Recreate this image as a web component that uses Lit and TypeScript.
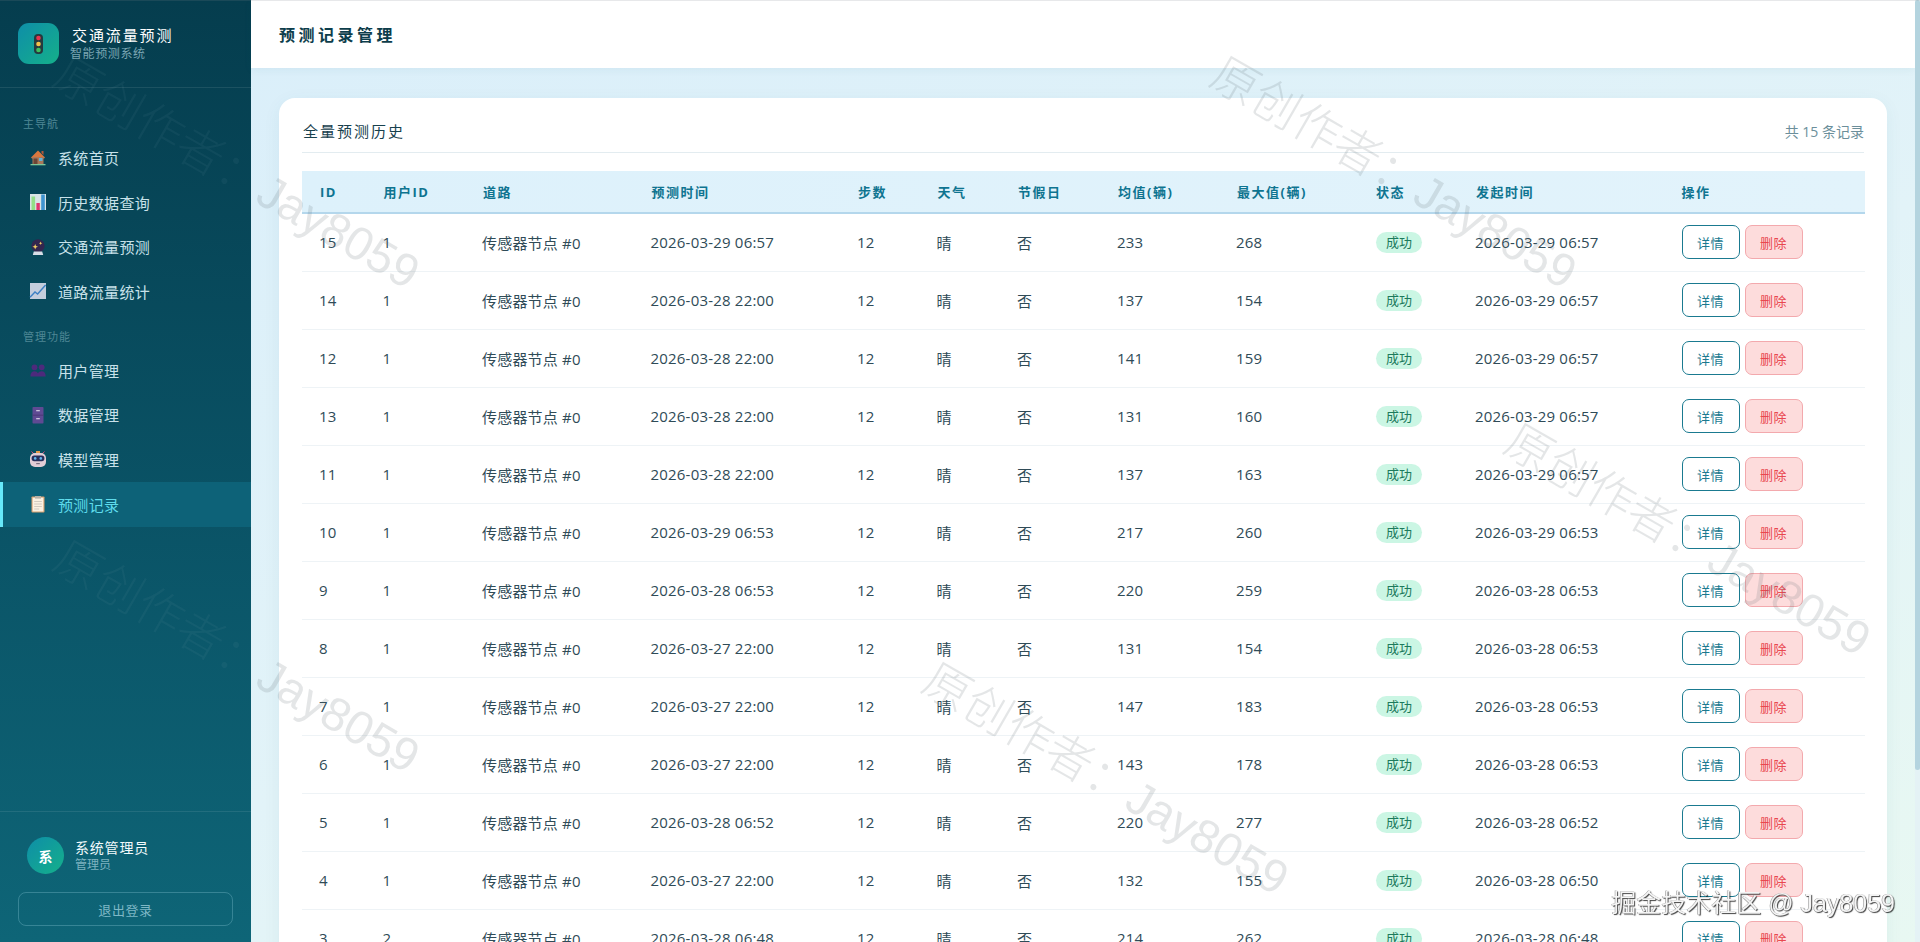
import { LitElement, html, css, svg } from 'lit';
import { customElement } from 'lit/decorators.js';

const icons: Record<string, unknown> = {
  house: svg`<path d="M2 9.5 9 2.5l7 7-1 1H3z" fill="#d9773f"/><path d="M12.5 3h2v4l-2-2z" fill="#b5583a"/><rect x="3.5" y="9" width="11" height="7" fill="#a8785a"/><rect x="4.5" y="10.5" width="4" height="5.5" fill="#6b4636"/><rect x="10" y="10" width="3.4" height="3" fill="#62b4d8"/><rect x="1.5" y="16" width="15" height="1.3" fill="#7cc79a"/>`,
  bars: svg`<rect x="1" y="1" width="16" height="16" fill="#d9e4e6"/><rect x="2.5" y="3.5" width="3.6" height="13.5" fill="#93de87"/><rect x="7.4" y="10" width="3.4" height="7" fill="#e2356f"/><rect x="12.2" y="1.5" width="3.6" height="15.5" fill="#3f93cf"/>`,
  ball: svg`<circle cx="9" cy="7.8" r="6.6" fill="#33264f"/><path d="M4.8 13.5h8.4l1 3.5H3.8z" fill="#d7dde6"/><path d="M6.2 6 7 8l2 .8-2 .8-.8 2-.8-2-2-.8 2-.8z" fill="#f2cf63"/><path d="M11.6 3.4l.5 1.3 1.3.5-1.3.5-.5 1.3-.5-1.3-1.3-.5 1.3-.5z" fill="#f2cf63"/>`,
  chart: svg`<rect x="1" y="1" width="16" height="16" fill="#c4cedd"/><path d="M1 15.2 6 10l2.6 2L16.6 3" fill="none" stroke="#3e80c4" stroke-width="1.4"/>`,
  users: svg`<g fill="#4d2a7c"><circle cx="5.5" cy="6.3" r="2.9"/><circle cx="12.7" cy="6.3" r="2.9"/><path d="M1.4 15.6c0-3.6 1.7-5.3 4.1-5.3 1.5 0 2.7.7 3.4 2 .7-1.3 2-2 3.8-2 2.4 0 4 1.7 4 5.3z"/></g>`,
  cabinet: svg`<rect x="3.5" y="1" width="11" height="16.5" rx=".8" fill="#5f4a93"/><path d="M3.5 9.2h11" stroke="#453570" stroke-width=".8"/><rect x="7.2" y="4" width="3.6" height="1.3" fill="#c9c3dc"/><rect x="7.2" y="12" width="3.6" height="1.3" fill="#c9c3dc"/>`,
  robot: svg`<path d="M2.5 1.5l2.6 2.6M15.5 1.5l-2.6 2.6" stroke="#d3477c" stroke-width="1"/><rect x="7" y="1" width="4" height="2.4" fill="#e29a4a"/><rect x="1" y="3" width="16" height="14" rx="5" fill="#e2cdd6"/><rect x="2.6" y="5.6" width="12.8" height="5.6" rx="2.6" fill="#28305c"/><circle cx="6.2" cy="8.4" r="1.3" fill="#62b7ef"/><circle cx="11.8" cy="8.4" r="1.3" fill="#62b7ef"/><rect x="7.2" y="13" width="3.6" height="1.2" fill="#7c6f80"/>`,
  clipboard: svg`<rect x="2.5" y="1.5" width="13" height="16" rx=".8" fill="#d9a06f"/><rect x="3.6" y="2.6" width="10.8" height="13.9" fill="#faf1e2"/><rect x="6" y="1" width="6" height="2.6" fill="#b8b2a8"/><path d="M5.2 6.5h7.6M5.2 9h7.6M5.2 11.5h7.6M5.2 14h5" stroke="#c8c2b8" stroke-width=".8"/>`,
};

const mainNav = [
  { icon: 'house', label: '系统首页' },
  { icon: 'bars', label: '历史数据查询' },
  { icon: 'ball', label: '交通流量预测' },
  { icon: 'chart', label: '道路流量统计' },
];

const adminNav = [
  { icon: 'users', label: '用户管理' },
  { icon: 'cabinet', label: '数据管理' },
  { icon: 'robot', label: '模型管理' },
  { icon: 'clipboard', label: '预测记录', active: true },
];

const columns = [
  { label: 'ID', width: 63.5 },
  { label: '用户ID', width: 99.5 },
  { label: '道路', width: 168.5 },
  { label: '预测时间', width: 206.5 },
  { label: '步数', width: 79.5 },
  { label: '天气', width: 80.5 },
  { label: '节假日', width: 100 },
  { label: '均值(辆)', width: 119 },
  { label: '最大值(辆)', width: 139 },
  { label: '状态', width: 100 },
  { label: '发起时间', width: 205.5 },
  { label: '操作', width: 201.5 },
];

// id, user, predict time, mean, max, created
const records: [number, number, string, number, number, string][] = [
  [15, 1, '2026-03-29 06:57', 233, 268, '2026-03-29 06:57'],
  [14, 1, '2026-03-28 22:00', 137, 154, '2026-03-29 06:57'],
  [12, 1, '2026-03-28 22:00', 141, 159, '2026-03-29 06:57'],
  [13, 1, '2026-03-28 22:00', 131, 160, '2026-03-29 06:57'],
  [11, 1, '2026-03-28 22:00', 137, 163, '2026-03-29 06:57'],
  [10, 1, '2026-03-29 06:53', 217, 260, '2026-03-29 06:53'],
  [9, 1, '2026-03-28 06:53', 220, 259, '2026-03-28 06:53'],
  [8, 1, '2026-03-27 22:00', 131, 154, '2026-03-28 06:53'],
  [7, 1, '2026-03-27 22:00', 147, 183, '2026-03-28 06:53'],
  [6, 1, '2026-03-27 22:00', 143, 178, '2026-03-28 06:53'],
  [5, 1, '2026-03-28 06:52', 220, 277, '2026-03-28 06:52'],
  [4, 1, '2026-03-27 22:00', 132, 155, '2026-03-28 06:50'],
  [3, 2, '2026-03-28 06:48', 214, 262, '2026-03-28 06:48'],
  [2, 1, '2026-03-27 22:00', 136, 158, '2026-03-28 06:48'],
  [1, 1, '2026-03-27 22:00', 140, 166, '2026-03-28 06:45'],
];

// start of each repeated watermark, as left/top in the viewport
const marks = [
  { x: 58, y: 41, side: true },
  { x: 1215, y: 41 },
  { x: 1509, y: 408 },
  { x: 58, y: 525, side: true },
  { x: 927, y: 647 },
];

@customElement('app-root')
export class AppRoot extends LitElement {
  static override styles = css`
    :host {
      display: block;
      height: 100vh;
      font-family: 'Open Sans', 'Noto Sans CJK SC', sans-serif;
      color: #2f4b57;
    }

    .page {
      display: flex;
      align-items: flex-start;
      height: 100vh;
      overflow: hidden;
      background: linear-gradient(160deg, #d9eefa 0%, #e2f3f8 55%, #e8f8f2 100%);
    }

    .sidebar {
      flex: 0 0 251px;
      height: 100vh;
      display: flex;
      flex-direction: column;
      background: linear-gradient(180deg, #053d4e 0%, #0a5366 55%, #0e6577 100%);
    }

    .brand {
      display: flex;
      align-items: center;
      gap: 13px;
      height: 88px;
      padding: 0 18px;
      box-sizing: border-box;
      border-bottom: 1px solid rgba(255, 255, 255, 0.09);
    }

    .brand-logo {
      width: 41px;
      height: 41px;
      border-radius: 11px;
      background: linear-gradient(135deg, #0e8ea8, #15b08a);
      display: flex;
      align-items: center;
      justify-content: center;
    }

    .brand-title {
      font-size: 15px;
      line-height: 20px;
      letter-spacing: 1.9px;
      color: #fff;
    }

    .brand-sub {
      font-size: 12px;
      line-height: 17px;
      letter-spacing: 0.6px;
      color: #7ba6b3;
      margin-left: -2px;
    }

    .nav {
      flex: 1;
      padding-top: 29px;
    }

    .nav-label {
      font-size: 11px;
      line-height: 14px;
      letter-spacing: 1px;
      color: #4f8795;
      padding-left: 23px;
      margin-bottom: 4px;
    }

    .nav-group {
      margin-bottom: 16px;
    }

    .nav-item {
      display: flex;
      align-items: center;
      gap: 11px;
      height: 44.7px;
      padding-left: 29px;
      box-sizing: border-box;
      font-size: 15px;
      letter-spacing: 0.35px;
      color: #c8e2ea;

      &.active {
        background: #0d6278;
        color: #5fdcec;
        box-shadow: inset 3px 0 0 #67e8f9;
      }

      svg {
        width: 18px;
        height: 18px;
        flex: none;
      }
    }

    .side-foot {
      border-top: 1px solid rgba(255, 255, 255, 0.09);
      padding: 25px 18px 16px;
    }

    .user {
      display: flex;
      align-items: center;
      gap: 11px;
      padding-left: 9px;
      margin-bottom: 18px;
    }

    .avatar {
      width: 37px;
      height: 37px;
      border-radius: 50%;
      background: linear-gradient(135deg, #0e8ea8, #15b08a);
      color: #fff;
      font-size: 14px;
      font-weight: 700;
      display: flex;
      align-items: center;
      justify-content: center;
    }

    .user-name {
      font-size: 14px;
      line-height: 18px;
      letter-spacing: 0.8px;
      color: #f2fafc;
    }

    .user-role {
      font-size: 12px;
      line-height: 16px;
      color: #7fb3c0;
    }

    .logout {
      height: 34px;
      box-sizing: border-box;
      border: 1px solid rgba(160, 220, 235, 0.28);
      border-radius: 8px;
      font-size: 13px;
      letter-spacing: 0.6px;
      color: #7fb8c6;
      display: flex;
      align-items: center;
      justify-content: center;
    }

    .main {
      flex: 1;
      min-width: 0;
      margin-right: 5px;
    }

    .topbar {
      height: 68px;
      display: flex;
      align-items: center;
      padding-left: 28px;
      background: #fff;
      box-shadow: 0 2px 8px rgba(14, 101, 119, 0.06);
      font-size: 16px;
      font-weight: 700;
      letter-spacing: 3.5px;
      color: #0d3d4b;
    }

    .content {
      padding: 30px 28px 44px;
    }

    .card {
      background: #fff;
      border-radius: 16px;
      padding: 0 23px 24px;
      box-shadow: 0 4px 18px rgba(14, 101, 119, 0.06);
    }

    .card-head {
      display: flex;
      align-items: center;
      justify-content: space-between;
      height: 55px;
      padding-top: 11px;
      box-sizing: border-box;
      border-bottom: 1px solid #e3ecf0;
      margin-bottom: 18px;
    }

    .card-title {
      font-size: 15px;
      letter-spacing: 2px;
      color: #17404d;
      margin-left: 1px;
    }

    .card-count {
      font-size: 14px;
      color: #6c8f9b;
    }

    table {
      width: 100%;
      table-layout: fixed;
      border-collapse: collapse;
    }

    col,
    th,
    td {
      box-sizing: border-box;
    }

    thead tr {
      background: linear-gradient(90deg, #ddf1fb, #e2f3fb);
    }

    th {
      height: 42px;
      padding: 0 0 0 18px;
      text-align: left;
      font-size: 13px;
      font-weight: 700;
      letter-spacing: 1.5px;
      white-space: nowrap;
      color: #0e7490;
      border-bottom: 2px solid #b4d7ec;
    }

    td {
      height: 58px;
      padding: 0 0 0 17px;
      font-size: 15px;
      letter-spacing: 0.2px;
      white-space: nowrap;
      border-bottom: 1px solid #eef3f6;
    }

    .ops {
      display: flex;
      gap: 5px;
      margin-left: 1px;
    }

    .btn {
      width: 58px;
      height: 34px;
      box-sizing: border-box;
      border-radius: 7px;
      font-size: 13px;
      letter-spacing: 0.5px;
      display: flex;
      align-items: center;
      justify-content: center;
      border: 1.5px solid #1a7a90;
      color: #1a7a90;
      background: #fff;

      &.danger {
        border: 1px solid #f3a9ad;
        color: #e9474f;
        background: #fddcdc;
      }
    }

    .badge {
      display: inline-block;
      height: 21px;
      line-height: 21px;
      margin-left: 1px;
      padding: 0 10px;
      border-radius: 11px;
      font-size: 13px;
      letter-spacing: 0;
      color: #1c7a5c;
      background: #cbf6e4;
    }

    /* headless capture hides native scrollbars, so the bar is drawn */
    .scrollbar {
      position: fixed;
      top: 0;
      right: 0;
      bottom: 0;
      width: 5px;
      background: #e4f2f5;
    }

    .thumb {
      height: 770px;
      border-radius: 3px;
      background: #b4d4df;
    }

    .watermarks {
      position: fixed;
      inset: 0;
      overflow: hidden;
      pointer-events: none;
      border-top: 1px solid rgba(120, 130, 140, 0.18);
    }

    .mark {
      position: absolute;
      transform: rotate(30deg);
      transform-origin: 0 50%;
      font-family: 'Liberation Sans', 'Noto Sans CJK SC', sans-serif;
      font-size: 47px;
      font-weight: 300;
      line-height: 56px;
      white-space: nowrap;
      color: rgba(95, 105, 115, 0.17);

      &.side .cn {
        color: rgba(130, 165, 175, 0.08);
      }
    }

    .stamp {
      position: fixed;
      right: 25px;
      bottom: 24px;
      pointer-events: none;
      font-family: 'Liberation Sans', 'Noto Sans CJK SC', sans-serif;
      font-size: 25px;
      line-height: 30px;
      white-space: nowrap;
      color: #f4f4f4;
      text-shadow: 1px 1px 1px rgba(0, 0, 0, 0.75), -0.5px -0.5px 0 rgba(90, 90, 90, 0.7);
    }
  `;

  private renderNav(items: { icon: string; label: string; active?: boolean }[]) {
    return items.map(
      (item) => html`
        <div class="nav-item ${item.active ? 'active' : ''}">
          <svg viewBox="0 0 18 18">${icons[item.icon]}</svg>
          <span>${item.label}</span>
        </div>
      `
    );
  }

  private renderRow(r: (typeof records)[number]) {
    return html`
      <tr>
        <td>${r[0]}</td>
        <td>${r[1]}</td>
        <td>传感器节点 #0</td>
        <td>${r[2]}</td>
        <td>12</td>
        <td>晴</td>
        <td>否</td>
        <td>${r[3]}</td>
        <td>${r[4]}</td>
        <td><span class="badge">成功</span></td>
        <td>${r[5]}</td>
        <td>
          <div class="ops">
            <span class="btn">详情</span>
            <span class="btn danger">删除</span>
          </div>
        </td>
      </tr>
    `;
  }

  override render() {
    return html`
      <div class="page">
        <aside class="sidebar">
          <div class="brand">
            <div class="brand-logo">
              <svg width="9" height="20" viewBox="0 0 9 20">
                <rect width="9" height="20" rx="4" fill="#253a3f" />
                <circle cx="4.5" cy="4" r="2.3" fill="#e8344e" />
                <circle cx="4.5" cy="10" r="2.3" fill="#f5c04a" />
                <circle cx="4.5" cy="16" r="2.3" fill="#3fbf5f" />
              </svg>
            </div>
            <div>
              <div class="brand-title">交通流量预测</div>
              <div class="brand-sub">智能预测系统</div>
            </div>
          </div>
          <nav class="nav">
            <div class="nav-group">
              <div class="nav-label">主导航</div>
              ${this.renderNav(mainNav)}
            </div>
            <div class="nav-group">
              <div class="nav-label">管理功能</div>
              ${this.renderNav(adminNav)}
            </div>
          </nav>
          <div class="side-foot">
            <div class="user">
              <div class="avatar">系</div>
              <div>
                <div class="user-name">系统管理员</div>
                <div class="user-role">管理员</div>
              </div>
            </div>
            <div class="logout">退出登录</div>
          </div>
        </aside>
        <main class="main">
          <header class="topbar">预测记录管理</header>
          <div class="content">
            <section class="card">
              <div class="card-head">
                <span class="card-title">全量预测历史</span>
                <span class="card-count">共 15 条记录</span>
              </div>
              <table>
                <colgroup>
                  ${columns.map((c) => html`<col style="width:${c.width}px" />`)}
                </colgroup>
                <thead>
                  <tr>${columns.map((c) => html`<th>${c.label}</th>`)}</tr>
                </thead>
                <tbody>${records.map((r) => this.renderRow(r))}</tbody>
              </table>
            </section>
          </div>
        </main>
      </div>
      <div class="scrollbar"><div class="thumb"></div></div>
      <div class="watermarks">
        ${marks.map(
          (m) => html`<div class="mark ${m.side ? 'side' : ''}" style="left:${m.x}px;top:${m.y}px"><span class="cn">原创作者：</span>Jay8059</div>`
        )}
      </div>
      <div class="stamp">掘金技术社区 @ Jay8059</div>
    `;
  }
}

declare global {
  interface HTMLElementTagNameMap {
    'app-root': AppRoot;
  }
}
